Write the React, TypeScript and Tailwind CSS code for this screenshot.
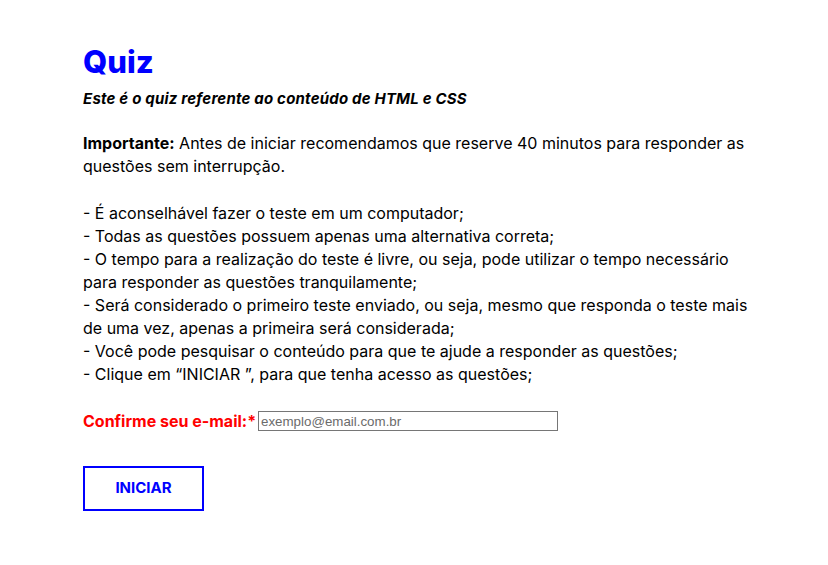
import React from "react";

export default function App() {
  const f = { fontFamily: "Inter, 'Open Sans', sans-serif" };
  return (
    <div className="min-h-[565px] w-[828px] bg-white pl-[83px] pt-[38px] text-black" style={f}>
      <h1 className="text-[31px] font-extrabold leading-[48px] text-[#0000ff]">Quiz</h1>
      <p className="mt-[2px] text-[15px] font-bold italic leading-[21px] tracking-[0.2px]">
        Este é o quiz referente ao conteúdo de HTML e CSS
      </p>
      <p className="mt-[23px] text-[16px] leading-[23px]">
        <span className="font-bold">Importante:</span> Antes de iniciar recomendamos que reserve 40 minutos para responder as
        <br />
        questões sem interrupção.
      </p>
      <p className="mt-[24px] text-[16px] leading-[23px]">
        - É aconselhável fazer o teste em um computador;
        <br />- Todas as questões possuem apenas uma alternativa correta;
        <br />- O tempo para a realização do teste é livre, ou seja, pode utilizar o tempo necessário
        <br />
        para responder as questões tranquilamente;
        <br />- Será considerado o primeiro teste enviado, ou seja, mesmo que responda o teste mais
        <br />
        de uma vez, apenas a primeira será considerada;
        <br />- Você pode pesquisar o conteúdo para que te ajude a responder as questões;
        <br />- Clique em “INICIAR ”, para que tenha acesso as questões;
      </p>
      <div className="mt-[25px] flex h-[20px] items-center">
        <span className="w-[175px] text-[16px] font-bold text-[#ff0000]">Confirme seu e-mail:*</span>
        <input
          className="h-[20px] w-[300px] border border-[#767676] px-[2px] text-[13.33px] text-black outline-none placeholder:text-[#6b6b6b]"
          style={{ fontFamily: "'Liberation Sans', Arial, sans-serif" }}
          placeholder="exemplo@email.com.br"
        />
      </div>
      <button className="mt-[35px] flex h-[45px] w-[121px] items-center justify-center border-2 border-[#0000ff] bg-white text-[15px] font-bold text-[#0000ff]">
        INICIAR
      </button>
    </div>
  );
}
